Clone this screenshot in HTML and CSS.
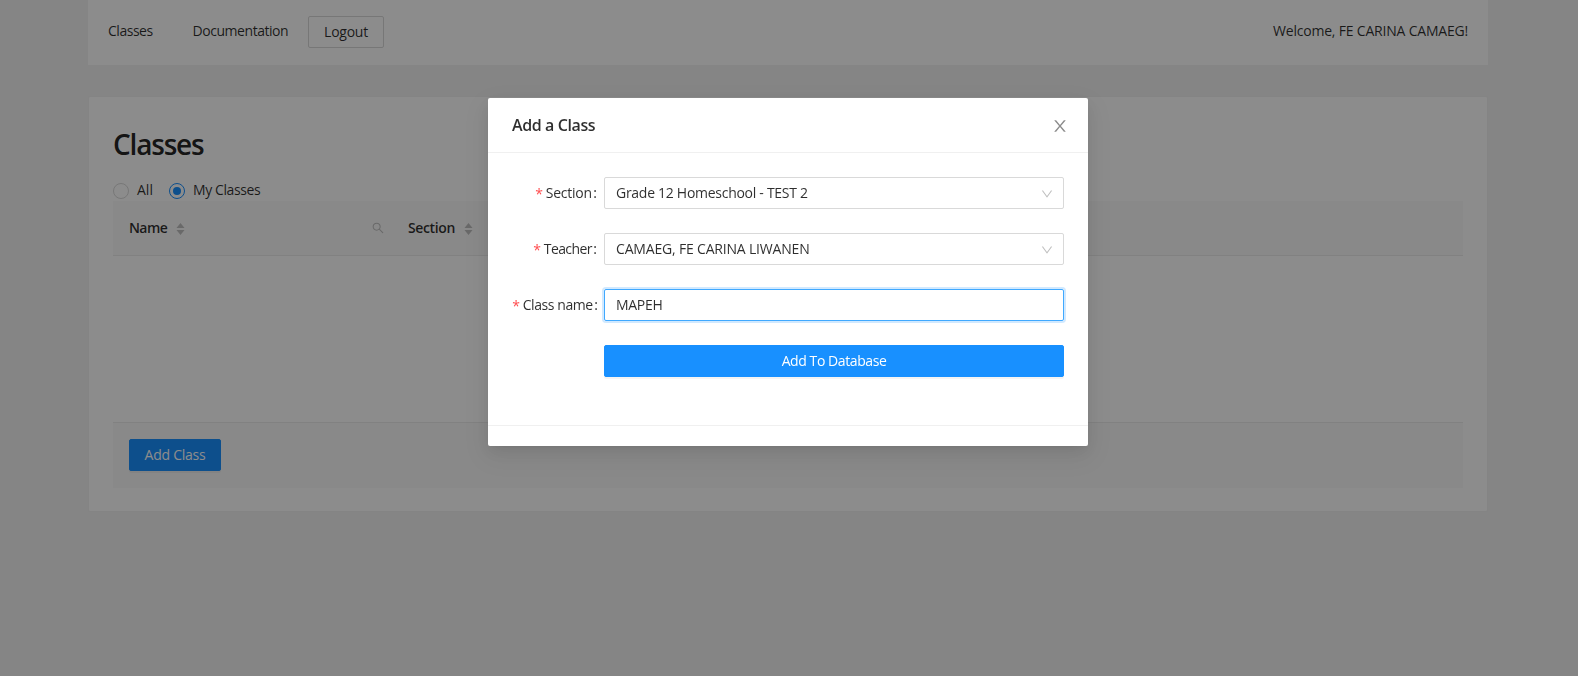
FILE: index.html
```html
<!DOCTYPE html>
<html lang="en">
<head>
<meta charset="utf-8">
<title>Classes</title>
<link rel="stylesheet" href="styles.css">
</head>
<body>
<div class="page">
  <header class="topbar">
    <nav class="nav">
      <a class="nav-link link-classes">Classes</a>
      <a class="nav-link link-docs">Documentation</a>
      <button class="btn btn-default">Logout</button>
    </nav>
    <span class="welcome">Welcome, FE CARINA CAMAEG!</span>
  </header>
  <main class="card">
    <h1 class="title">Classes</h1>
    <div class="radios">
      <label class="radio"><span class="dot"></span><span>All</span></label>
      <label class="radio"><span class="dot dot-on"></span><span class="radio-text">My Classes</span></label>
    </div>
    <div class="table">
      <div class="thead">
        <div class="th th-name">
          <span class="th-text">Name</span>
          <svg class="sorter" viewBox="0 0 9 12"><path d="M4.5 0 8.5 5H.5zM4.5 12 .5 7h8z"/></svg>
          <svg class="search" viewBox="64 64 896 896"><path d="M909.6 854.5L649.9 594.8C690.2 542.7 712 479 712 412c0-80.2-31.3-155.4-87.9-212.1-56.6-56.7-132-87.9-212.1-87.9s-155.5 31.3-212.1 87.9C143.2 256.5 112 331.8 112 412c0 80.1 31.3 155.5 87.9 212.1C256.5 680.8 331.8 712 412 712c67 0 130.6-21.8 182.7-62l259.7 259.6a8.2 8.2 0 0 0 11.6 0l43.6-43.5a8.2 8.2 0 0 0 0-11.6zM570.4 570.4C528 612.7 471.8 636 412 636s-116-23.3-158.4-65.6C211.3 528 188 471.8 188 412s23.3-116.1 65.6-158.4C296 211.3 352.2 188 412 188s116.1 23.2 158.4 65.6S636 352.2 636 412s-23.3 116.1-65.6 158.4z"/></svg>
        </div>
        <div class="th">
          <span class="th-text th-section">Section</span>
          <svg class="sorter" viewBox="0 0 9 12"><path d="M4.5 0 8.5 5H.5zM4.5 12 .5 7h8z"/></svg>
        </div>
      </div>
      <div class="tbody"></div>
      <div class="tfoot"><button class="btn btn-primary">Add Class</button></div>
    </div>
  </main>
</div>
<div class="mask">
  <section class="modal">
    <div class="modal-head">
      <span class="modal-title">Add a Class</span>
      <svg class="close" viewBox="64 64 896 896"><path d="M563.8 512l262.5-312.9c4.4-5.2.7-13.1-6.1-13.1h-79.8c-4.7 0-9.2 2.1-12.3 5.7L511.6 449.8 295.1 191.7c-3-3.6-7.5-5.7-12.3-5.7H203c-6.8 0-10.5 7.9-6.1 13.1L459.4 512 196.9 824.9A7.95 7.95 0 0 0 203 838h79.8c4.7 0 9.2-2.1 12.3-5.7l216.5-258.1 216.5 258.1c3 3.6 7.5 5.7 12.3 5.7h79.8c6.8 0 10.5-7.9 6.1-13.1L563.8 512z"/></svg>
    </div>
    <div class="form">
      <div class="row">
        <label class="label"><i class="req">*</i><span class="l-section">Section</span><span class="colon">:</span></label>
        <div class="field"><span class="v-section">Grade 12 Homeschool - TEST 2</span>
          <svg class="down" viewBox="64 64 896 896"><path d="M884 256h-75c-5.1 0-9.9 2.5-12.9 6.6L512 654.2 227.9 262.6c-3-4.1-7.8-6.6-12.9-6.6h-75c-6.5 0-10.3 7.4-6.5 12.7l352.6 486.1c12.8 17.6 39 17.6 51.7 0l352.6-486.1c3.9-5.3.1-12.7-6.4-12.7z"/></svg>
        </div>
      </div>
      <div class="row">
        <label class="label"><i class="req">*</i><span class="l-teacher">Teacher</span><span class="colon">:</span></label>
        <div class="field"><span class="v-teacher">CAMAEG, FE CARINA LIWANEN</span>
          <svg class="down" viewBox="64 64 896 896"><path d="M884 256h-75c-5.1 0-9.9 2.5-12.9 6.6L512 654.2 227.9 262.6c-3-4.1-7.8-6.6-12.9-6.6h-75c-6.5 0-10.3 7.4-6.5 12.7l352.6 486.1c12.8 17.6 39 17.6 51.7 0l352.6-486.1c3.9-5.3.1-12.7-6.4-12.7z"/></svg>
        </div>
      </div>
      <div class="row">
        <label class="label label-wide"><i class="req">*</i><span class="l-name">Class name</span><span class="colon">:</span></label>
        <div class="field field-focus"><span class="v-name">MAPEH</span></div>
      </div>
      <div class="row row-submit"><button class="btn btn-primary btn-submit">Add To Database</button></div>
    </div>
    <div class="modal-foot"></div>
  </section>
</div>
</body>
</html>
```
FILE: styles.css
```css
* { box-sizing: border-box; }

body {
  margin: 0;
  background: #f3f3f3;
  color: rgba(0, 0, 0, .82);
  font: 14px/22px "Open Sans", "Noto Sans", sans-serif;
  white-space: nowrap;
}

.page {
  height: 676px;
  padding: 0 90px 0 88px;
  overflow: hidden;
}

.topbar {
  display: flex;
  justify-content: space-between;
  height: 65px;
  padding: 0 20px;
  background: #fff;
}

.nav { display: flex; padding-top: 16px; }
.nav-link { line-height: 30px; }
.link-classes { width: 84.5px; letter-spacing: -.48px; }
.link-docs { width: 115.5px; letter-spacing: -.45px; }
.welcome { padding-top: 16px; line-height: 30px; letter-spacing: -.2px; }

.btn {
  height: 32px;
  padding: 0;
  border: 1px solid #d9d9d9;
  border-radius: 2px;
  background: #fff;
  color: inherit;
  font: inherit;
}
.btn-default { width: 76px; letter-spacing: -.25px; }
.btn-primary {
  width: 92px;
  border-color: #1890ff;
  background: #1890ff;
  color: #fff;
  letter-spacing: -.25px;
  box-shadow: 0 2px 0 rgba(0, 0, 0, .045);
}

.card {
  width: 1400px;
  height: 416px;
  margin-top: 31px;
  padding: 24px;
  border: 1px solid #f0f0f0;
  border-radius: 2px;
  background: #fff;
}

.title {
  margin: 4px 0 16px;
  color: rgba(0, 0, 0, .87);
  font-size: 28px;
  font-weight: 550;
  line-height: 38px;
  letter-spacing: -1.2px;
}

.radios { display: flex; height: 22px; gap: 16px; }
.radio { display: flex; gap: 8px; line-height: 22px; }
.radio-text { letter-spacing: -.38px; }
.dot {
  width: 16px;
  height: 16px;
  margin-top: 4px;
  border: 1px solid #d9d9d9;
  border-radius: 50%;
}
.dot-on {
  padding: 3px;
  border-color: #1890ff;
  background: #1890ff content-box;
}

.thead {
  display: flex;
  height: 55px;
  background: #fafafa;
  border-bottom: 1px solid #ebebeb;
}
.th { display: flex; align-items: center; padding-left: 16px; }
.th-name { width: 279px; }
.th-text { width: 47px; font-weight: 600; letter-spacing: -.6px; }
.th-section { width: 56px; letter-spacing: -.37px; }
.sorter { width: 9px; height: 12px; margin-top: 1px; fill: #bfbfbf; }
.search { width: 12px; height: 12px; margin: 0 8px 0 auto; fill: #bfbfbf; }
.tbody { height: 166px; }
.tfoot {
  height: 66px;
  padding: 16px;
  background: #fafafa;
  border-top: 1px solid #ebebeb;
}

/* Dialog and the dimmed layer over the page */
.mask {
  position: fixed;
  inset: 0;
  padding: 98px 0 0 488px;
  background: rgba(0, 0, 0, .45);
}
.modal {
  width: 600px;
  height: 348px;
  border-radius: 2px;
  background: #fff;
  box-shadow: 0 3px 6px -4px rgba(0, 0, 0, .12), 0 6px 16px rgba(0, 0, 0, .08), 0 9px 28px 8px rgba(0, 0, 0, .05);
}
.modal-head {
  display: flex;
  align-items: center;
  justify-content: space-between;
  height: 55px;
  padding: 0 20px 0 24px;
  border-bottom: 1px solid #f0f0f0;
}
.modal-title { font-size: 16px; font-weight: 600; letter-spacing: -.4px; }
.close { width: 16px; height: 16px; margin-top: 2px; fill: #8c8c8c; }

.form {
  display: flex;
  flex-direction: column;
  gap: 24px;
  height: 272px;
  padding: 24px;
}
.row { display: flex; height: 32px; }
.label {
  display: flex;
  justify-content: flex-end;
  width: 92px;
  padding-right: 7px;
  line-height: 32px;
}
.label-wide { padding-right: 6px; }
.req {
  width: 10.5px;
  color: #ff4d4f;
  font: 14px/34px "Open Sans", sans-serif;
}
.l-section { letter-spacing: -.25px; }
.l-teacher { letter-spacing: -.6px; }
.l-name { letter-spacing: -.42px; }
.colon { margin-left: 1.5px; }
.field {
  display: flex;
  flex: 1;
  align-items: center;
  justify-content: space-between;
  padding: 0 10px 0 11px;
  border: 1px solid #d9d9d9;
  border-radius: 2px;
}
.field-focus { border-color: #40a9ff; box-shadow: 0 0 0 2px rgba(24, 144, 255, .2); }
.v-section { letter-spacing: -.28px; }
.v-teacher { letter-spacing: -.18px; }
.v-name { letter-spacing: -.3px; }
.down { width: 12px; height: 12px; margin-top: 1px; fill: #bfbfbf; }
.row-submit { padding-left: 92px; }
.btn-submit { width: 100%; letter-spacing: -.42px; }
.modal-foot { height: 21px; border-top: 1px solid #f0f0f0; }
```
